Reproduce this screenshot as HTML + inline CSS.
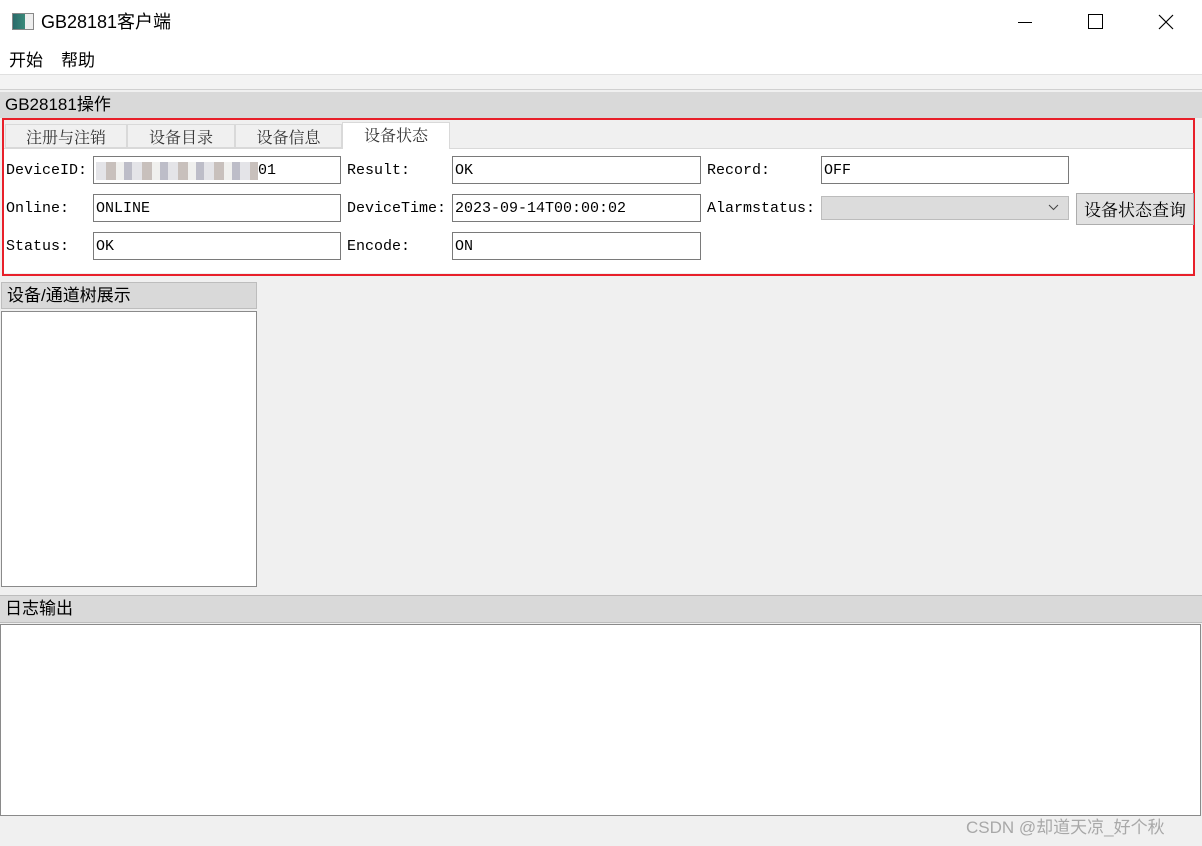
<!DOCTYPE html>
<html><head><meta charset="utf-8"><style>
*{margin:0;padding:0;box-sizing:border-box}
body{width:1202px;height:846px;background:#f0f0f0;position:relative;overflow:hidden;font-family:"Liberation Sans","Noto Sans CJK SC",sans-serif;color:#000}
.a{position:absolute}
.inp{position:absolute;background:#fff;border:1px solid #7a7a7a;height:28px;padding:5px 2px;font-family:"Liberation Mono","Noto Serif CJK SC",monospace;font-size:15px;line-height:18px}
.lab{position:absolute;font-family:"Liberation Mono",monospace;font-size:15px;line-height:18px}
.tab{position:absolute;top:124px;height:24px;background:#f0f0f0;border:1px solid #d9d9d9;font-family:"Noto Serif CJK SC",serif;font-size:16px;text-align:center;line-height:24px;color:#333}
.dt{position:absolute;background:#d9d9d9;border:1px solid #bdbdbd;font-size:17px;line-height:26px;padding-left:5px}
</style></head><body>
<div class="a" style="left:0;top:0;width:1202px;height:74px;background:#fff"></div>
<div class="a" style="left:12px;top:13px;width:22px;height:17px;border:1px solid #888;background:linear-gradient(90deg,#2a6a6a,#3a8a7a 60%,#eee 60%)"></div>
<div class="a" style="left:41px;top:9px;font-size:18px;line-height:26px">GB28181客户端</div>
<div class="a" style="left:1018px;top:22px;width:14px;height:1px;background:#000"></div>
<div class="a" style="left:1088px;top:14px;width:15px;height:15px;border:1px solid #000"></div>
<svg class="a" style="left:1158px;top:14px" width="16" height="16"><path d="M1 1L15 15M15 1L1 15" stroke="#000" stroke-width="1.2"/></svg>
<div class="a" style="left:9px;top:49px;font-size:17px;line-height:24px">开始</div>
<div class="a" style="left:61px;top:49px;font-size:17px;line-height:24px">帮助</div>
<div class="a" style="left:0;top:74px;width:1202px;height:16px;background:#f3f3f3;border-top:1px solid #e0e0e0;border-bottom:1px solid #d0d0d0"></div>
<div class="dt" style="left:0;top:92px;width:1202px;height:26px;border:none">GB28181操作</div>
<div class="a" style="left:3px;top:148px;width:1190px;height:125px;background:#fff;border-top:1px solid #d9d9d9"></div>
<div class="tab" style="left:5px;width:122px">注册与注销</div>
<div class="tab" style="left:127px;width:108px">设备目录</div>
<div class="tab" style="left:235px;width:107px">设备信息</div>
<div class="tab" style="left:342px;top:122px;height:27px;width:108px;background:#fff;border-bottom:none">设备状态</div>
<div class="a" style="left:2px;top:118px;width:1193px;height:158px;border:2px solid #e8202a"></div>
<div class="lab" style="left:6px;top:162px">DeviceID:</div>
<div class="inp" style="left:93px;top:156px;width:248px"><span style="display:inline-block;width:162px;height:18px;vertical-align:top;background:repeating-linear-gradient(90deg,#e4e4e8 0 10px,#c8c0bc 10px 20px,#f0f0ee 20px 28px,#bdbdc8 28px 36px)"></span>01</div>
<div class="lab" style="left:347px;top:162px">Result:</div>
<div class="inp" style="left:452px;top:156px;width:249px">OK</div>
<div class="lab" style="left:707px;top:162px">Record:</div>
<div class="inp" style="left:821px;top:156px;width:248px">OFF</div>
<div class="lab" style="left:6px;top:200px">Online:</div>
<div class="inp" style="left:93px;top:194px;width:248px">ONLINE</div>
<div class="lab" style="left:347px;top:200px">DeviceTime:</div>
<div class="inp" style="left:452px;top:194px;width:249px">2023-09-14T00:00:02</div>
<div class="lab" style="left:707px;top:200px">Alarmstatus:</div>
<div class="a" style="left:821px;top:196px;width:248px;height:24px;background:#dcdcdc;border:1px solid #bcbcbc"></div>
<svg class="a" style="left:1048px;top:204px" width="11" height="7"><path d="M1 1L5.5 5.5L10 1" stroke="#444" fill="none"/></svg>
<div class="a" style="left:1076px;top:193px;width:118px;height:32px;background:#e1e1e1;border:1px solid #adadad;font-family:'Noto Serif CJK SC',serif;font-size:17px;line-height:30px;text-align:center">设备状态查询</div>
<div class="lab" style="left:6px;top:238px">Status:</div>
<div class="inp" style="left:93px;top:232px;width:248px">OK</div>
<div class="lab" style="left:347px;top:238px">Encode:</div>
<div class="inp" style="left:452px;top:232px;width:249px">ON</div>
<div class="dt" style="left:1px;top:282px;width:256px;height:27px">设备/通道树展示</div>
<div class="a" style="left:1px;top:311px;width:256px;height:276px;background:#fff;border:1px solid #8a8a8a"></div>
<div class="dt" style="left:0;top:595px;width:1202px;height:28px;border-left:none;border-right:none">日志输出</div>
<div class="a" style="left:0;top:624px;width:1201px;height:192px;background:#fff;border:1px solid #8a8a8a"></div>
<div class="a" style="left:966px;top:817px;font-size:17px;line-height:22px;color:#a8a8a8">CSDN @却道天凉_好个秋</div>
</body></html>
